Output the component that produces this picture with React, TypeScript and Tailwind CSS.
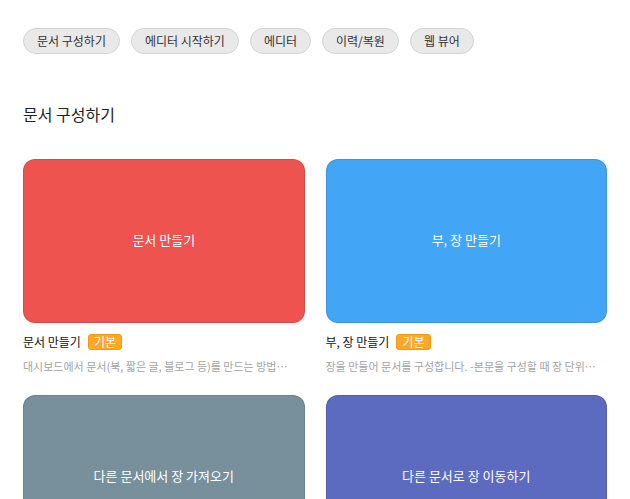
import React from "react";

type Card = {
  title: string;
  color: string;
  desc?: string;
  tag?: string;
};

const chips = ["문서 구성하기", "에디터 시작하기", "에디터", "이력/복원", "웹 뷰어"];

const cards: Card[] = [
  {
    title: "문서 만들기",
    color: "bg-[#ef5350]",
    tag: "기본",
    desc: "대시보드에서 문서(북, 짧은 글, 블로그 등)를 만드는 방법을 알아봅니다.",
  },
  {
    title: "부, 장 만들기",
    color: "bg-[#42a5f5]",
    tag: "기본",
    desc: "장을 만들어 문서를 구성합니다. -본문을 구성할 때 장 단위로 나누어 작성합니다.",
  },
  { title: "다른 문서에서 장 가져오기", color: "bg-[#78909c]" },
  { title: "다른 문서로 장 이동하기", color: "bg-[#5c6bc0]" },
];

const App = () => {
  return (
    <div className="min-h-screen bg-white px-[23px] pt-[28px] font-['Noto_Sans_CJK_KR',sans-serif] text-[#222]">
      <div className="flex gap-[11px]">
        {chips.map((chip) => (
          <div
            key={chip}
            className="flex h-[26px] items-center rounded-full border border-[#d4d4d4] bg-[#e9e9e9] px-[13px] text-[12px] text-[#333]"
          >
            {chip}
          </div>
        ))}
      </div>

      <h2 className="mt-[48px] text-[16px] leading-[24px] text-[#222]">문서 구성하기</h2>

      <div className="mt-[33px] grid grid-cols-2 gap-x-[21px] gap-y-[21px]">
        {cards.map((card) => (
          <div key={card.title}>
            <div
              className={`flex h-[164px] items-center justify-center rounded-[12px] border border-black/10 ${card.color} pb-[2px] text-[13px] text-white`}
            >
              {card.title}
            </div>
            <div className="mt-[11px] flex items-center gap-[7px] text-[12px] leading-[16px] text-[#111]">
              <span>{card.title}</span>
              {card.tag && (
                <span className="rounded-[3px] border border-[#f59a0c] bg-[#ffa726] px-[5px] text-[12px] leading-[14px] text-white">
                  {card.tag}
                </span>
              )}
            </div>
            <p className="mt-[8px] truncate pr-[8px] text-[11px] leading-[16px] text-[#a3a3a3]">
              {card.desc}
            </p>
          </div>
        ))}
      </div>
    </div>
  );
};

export default App;
